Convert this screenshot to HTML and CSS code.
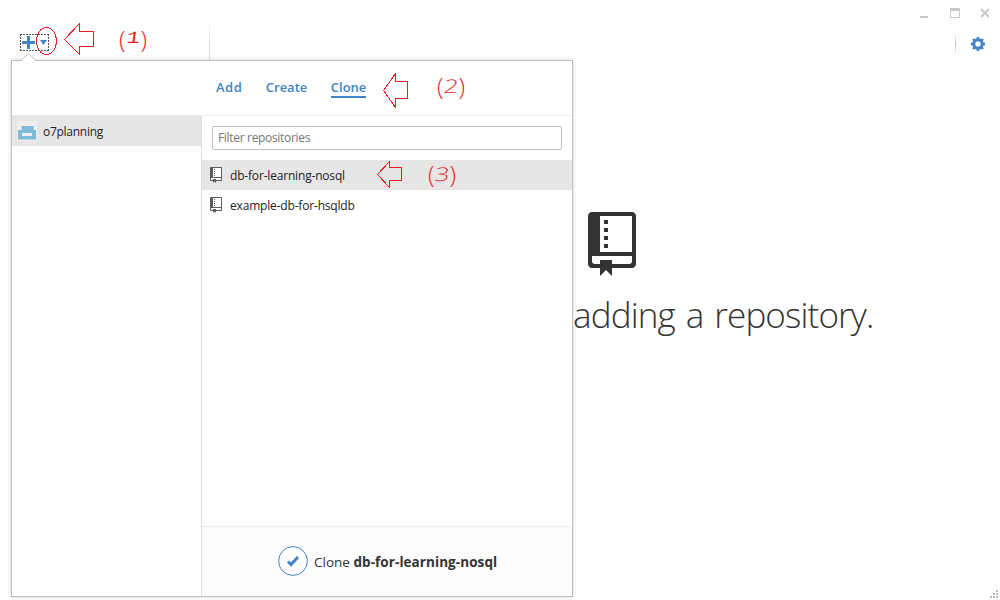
FILE: index.html
```html
<!DOCTYPE html>
<html lang="en">
<head>
<meta charset="utf-8">
<title>Clone repository</title>
<link rel="stylesheet" href="styles.css">
</head>
<body>
<svg class="defs" width="0" height="0" aria-hidden="true">
  <symbol id="repo" viewBox="0 0 12 16">
    <path fill="#fff" d="M1 1h10v12H1z"/>
    <path fill="currentColor" fill-rule="evenodd" d="M12 1v12c0 .55-.45 1-1 1H6v2l-1.500-1.500L3 16v-2H1c-.55 0-1-.45-1-1V1c0-.55.45-1 1-1h10c.55 0 1 .45 1 1zM1 11v1.300c0 .4.3.7.7.7H3v-1h3v1h4.300c.4 0 .7-.3.7-.7V11zM11 1H3v9h8zM4 2h1v1H4zM4 4h1v1H4zM4 6h1v1H4zM4 8h1v1H4z"/>
  </symbol>
</svg>
<div class="window">
  <header class="topbar">
    <div class="side-tools">
      <button class="add" aria-label="Add repository">
        <svg width="29" height="17" viewBox="0 0 29 17">
          <path fill="none" stroke="#555" stroke-dasharray="2 1" shape-rendering="crispEdges" d="M0 .5h29M0 16.500h29M.5 0v17M28.500 0v17"/>
          <path fill="#4183c4" d="M7 2h3v5h5v3h-5v5H7v-5H2V7h5zM20 6h7l-3.500 5z"/>
        </svg>
      </button>
    </div>
    <div class="window-tools">
      <svg class="controls" width="72" height="12" viewBox="0 0 72 12">
        <path fill="#c8c8c8" d="M0 8h8v2H0zM30 0h10v10H30zM31 3v6h8V3z" fill-rule="evenodd"/>
        <path stroke="#c8c8c8" stroke-width="2" d="M61 1l8 8M69 1l-8 8"/>
      </svg>
      <div class="settings">
        <svg width="14" height="14" viewBox="0 0 14 14">
          <path fill="#4183c4" fill-rule="evenodd" d="M5.800 0h2.400l.5 1.800 1 .4L11.300 1.200 12.800 2.700 11.800 4.300l.4 1 1.800.5v2.400l-1.800.5-.4 1 1 1.600-1.500 1.500-1.600-1-1 .4-.5 1.800H5.800l-.5-1.800-1-.4-1.600 1-1.500-1.500 1-1.600-.4-1L0 8.200V5.800l1.800-.5.4-1-1-1.600 1.500-1.500 1.600 1 1-.4zM7 4.300a2.700 2.700 0 100 5.400 2.700 2.700 0 000-5.400z"/>
        </svg>
      </div>
    </div>
  </header>
  <main class="welcome">
    <svg class="hero" width="48" height="64"><use href="#repo"/></svg>
    <h1>adding a repository.</h1>
  </main>
  <svg class="grip" width="10" height="10" viewBox="0 0 10 10"><path fill="#bbb" d="M6 0h2v2H6zM3 3h2v2H3zM6 3h2v2H6zM0 6h2v2H0zM3 6h2v2H3zM6 6h2v2H6z"/></svg>

  <section class="popover">
    <svg class="pointer" width="16" height="8" viewBox="0 0 16 8"><path fill="#fff" stroke="#c4c4c4" d="M0 7.500L7.500.5 15 7.500"/><path stroke="#fff" stroke-width="2" d="M1.500 8h12.500"/></svg>
    <nav class="tabs">
      <a class="tab-add">Add</a><a>Create</a><a class="active">Clone</a>
    </nav>
    <div class="columns">
      <aside class="accounts">
        <div class="account">
          <svg width="20" height="20" viewBox="0 0 20 20"><path fill="#efefef" d="M0 0h20v20H0z"/><path fill="#7dbbd9" fill-rule="evenodd" d="M4.500 5h12v4H19v9.500H1V9h3.500zM5 12v3h10v-3z"/></svg>
          <span>o7planning</span>
        </div>
      </aside>
      <div class="repos">
        <div class="filter"><span>Filter repositories</span></div>
        <ul>
          <li class="selected"><svg width="12" height="16"><use href="#repo"/></svg><span>db-for-learning-nosql</span></li>
          <li><svg width="12" height="16"><use href="#repo"/></svg><span>example-db-for-hsqldb</span></li>
        </ul>
        <footer>
          <svg width="30" height="30" viewBox="0 0 30 30"><circle cx="15" cy="15" r="14.400" fill="#fff" stroke="#4183c4"/><path fill="none" stroke="#4183c4" stroke-width="3" d="M10 15.500l3 3 7-7.500"/></svg>
          <p>Clone <b>db-for-learning-nosql</b></p>
        </footer>
      </div>
    </div>
  </section>

  <svg class="marks" width="500" height="200" viewBox="0 0 500 200" fill="none" stroke="#ed1c24" shape-rendering="crispEdges">
    <ellipse cx="46.500" cy="41" rx="10" ry="13.500"/>
    <path d="M64.500 39.500L79.500 23.500V31.500H93.500V46.500H79.500V54.500Z"/>
    <path d="M383.500 90.500L395.500 73.500V81.500H407.500V98.500H395.500V107.500Z"/>
    <path d="M377.500 174.500L389.500 161.500V167.500H401.500V180.500H389.500V187.500Z"/>
  </svg>
  <span class="note note-1">(<i>1</i>)</span>
  <span class="note note-2">(<i>2</i>)</span>
  <span class="note note-3">(<i>3</i>)</span>
</div>
</body>
</html>
```
FILE: styles.css
```css
* { box-sizing: border-box; }
body {
  margin: 0;
  background: #fff;
  color: #333;
  font: 12px/16px "Open Sans", "Noto Sans", sans-serif;
}
.defs { position: absolute; }
svg { display: block; flex: none; }
.window {
  position: relative;
  width: 1000px;
  height: 600px;
  overflow: hidden;
}
.topbar { display: flex; height: 60px; }
.side-tools {
  width: 210px;
  padding: 34px 0 0 20px;
  border-right: 1px solid;
  border-image: linear-gradient(transparent 20px, #ddd 40px) 1;
}
.add { display: block; padding: 0; border: 0; background: none; }
.window-tools {
  flex: 1;
  display: flex;
  flex-direction: column;
  align-items: flex-end;
  padding: 8px 9px 0 0;
}
.settings {
  display: flex;
  align-items: center;
  height: 20px;
  width: 36px;
  margin-top: 14px;
  padding-left: 15px;
  border-left: 1px solid;
  border-image: linear-gradient(transparent, #bbb, transparent) 1;
}
.controls { margin-right: -1px; }
.welcome { padding: 152px 0 0 573px; }
.hero { margin-left: 15px; color: #333; }
h1 {
  margin: 15px 0 0;
  font-size: 35px;
  line-height: 48px;
  font-weight: 300;
  letter-spacing: -.85px;
  word-spacing: 2.6px;
  white-space: nowrap;
}
.grip { position: absolute; right: 0; bottom: 0; }
.popover {
  position: absolute;
  left: 11px;
  top: 60px;
  width: 562px;
  height: 537px;
  display: flex;
  flex-direction: column;
  background: #fff;
  border: 1px solid #c0c0c0;
  box-shadow: 0 0 4px rgba(0, 0, 0, .18);
}
.pointer { position: absolute; left: 9px; top: -8px; }
.tabs {
  display: flex;
  align-items: flex-start;
  gap: 23.5px;
  height: 55px;
  padding: 17px 0 0 204px;
  border-bottom: 1px solid #eee;
  color: #4183c4;
  font-size: 13px;
  line-height: 18px;
  font-weight: 600;
}
.tabs a { height: 20px; }
.tabs .tab-add { letter-spacing: .5px; }
.tabs .active { border-bottom: 2px solid #4183c4; }
.columns { flex: 1; display: flex; }
.accounts { width: 190px; border-right: 1px solid #ddd; }
.account {
  display: flex;
  align-items: center;
  gap: 6px;
  height: 30px;
  padding: 2px 0 0 5px;
  background: #e6e6e6;
  color: #222;
  letter-spacing: -.28px;
}
.account svg { margin-top: -2px; }
.repos { flex: 1; display: flex; flex-direction: column; }
.filter {
  height: 24px;
  margin: 10px 10px 0;
  padding: 3px 5px;
  border: 1px solid #c0c0c0;
  border-radius: 2px;
  color: #767676;
  letter-spacing: -.32px;
}
ul { flex: 1; margin: 10px 0 0; padding: 0; list-style: none; }
li {
  display: flex;
  align-items: center;
  gap: 8px;
  height: 30px;
  padding-left: 8px;
  color: #222;
  letter-spacing: -.18px;
}
li span { padding-top: 2px; }
li svg { color: #5c5c5c; }
.selected { background: #e6e6e6; }
footer {
  display: flex;
  align-items: center;
  gap: 6px;
  height: 70px;
  padding: 0 0 2px 76px;
  border-top: 1px solid #eee;
  background: #fcfcfc;
  font-size: 13.5px;
}
footer p { margin: 2px 0 0; white-space: nowrap; }
footer b { letter-spacing: .07px; }
.marks { position: absolute; left: 0; top: 0; }
.note {
  position: absolute;
  display: flex;
  align-items: center;
  justify-content: space-between;
  width: 28px;
  height: 26px;
  color: #ed1c24;
  font: 300 24px/26px "Open Sans", sans-serif;
}
.note i { font: 300 19px/26px "Open Sans", sans-serif; transform: skewX(-8deg) scaleX(1.35); }
.note-1 { left: 119px; top: 26px; }
.note-1 i { font: 17px/26px "Liberation Mono", monospace; transform: skewX(-8deg) scaleX(1.3); }
.note-2 { left: 437px; top: 73px; }
.note-3 { left: 428px; top: 161px; }
```
